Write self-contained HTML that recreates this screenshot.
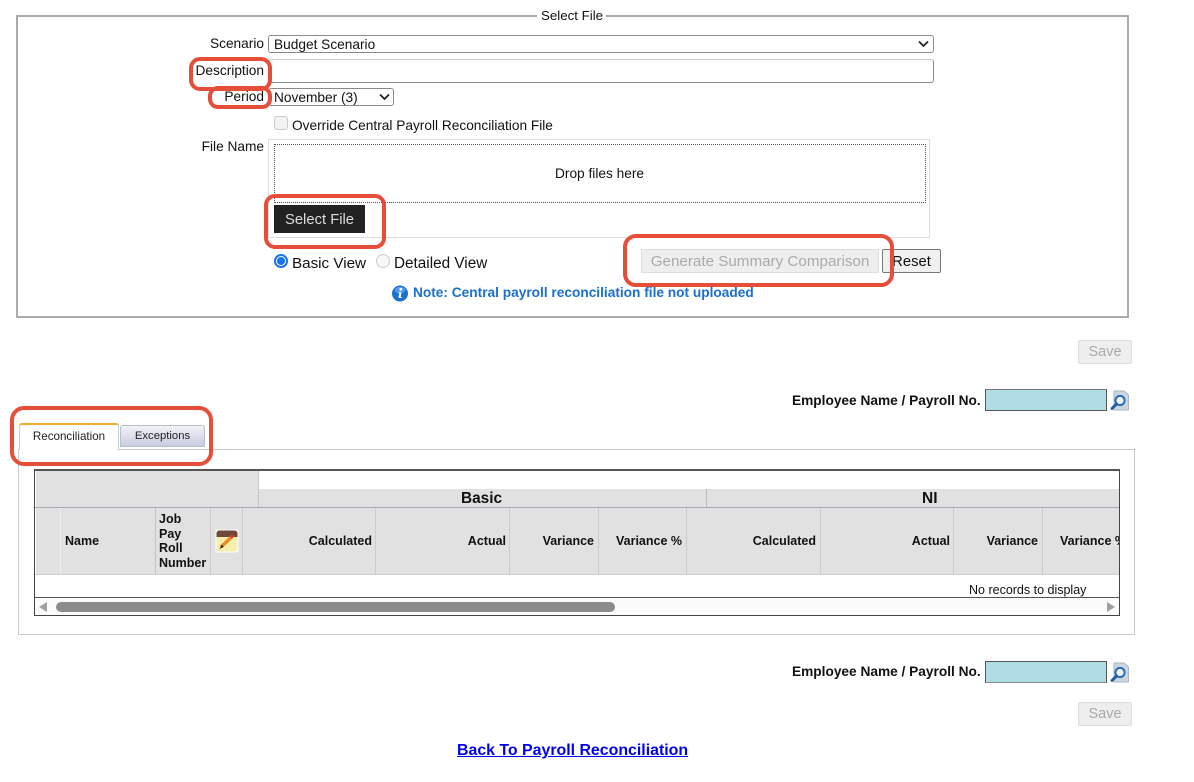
<!DOCTYPE html>
<html><head><meta charset="utf-8"><title>Select File</title>
<style>
html,body{margin:0;padding:0;background:#fff;width:1194px;height:782px;overflow:hidden}
body{position:relative;font-family:"Liberation Sans",sans-serif;font-size:13.7px;color:#111}
#w{position:absolute;left:0;top:0;width:1194px;height:782px;filter:blur(0.3px)}
.a{position:absolute;box-sizing:border-box}
.t{position:absolute;white-space:nowrap;line-height:16px}
.r{text-align:right}
.b{font-weight:bold}
.red{position:absolute;box-sizing:border-box;border:4px solid #e64e3a;background:transparent;z-index:5}
.btn{position:absolute;box-sizing:border-box;text-align:center;border-radius:2px;white-space:nowrap}
.dis{background:#eee;border:1px solid #ddd;color:#aaa;font-size:14.5px}
.h{position:absolute;background:#e1e1e1;box-sizing:border-box;border-right:1px solid #ccc;}
.th{position:absolute;font-weight:bold;font-size:12.5px;line-height:16px;white-space:nowrap}
</style></head><body><div id="w">

<!-- fieldset -->
<div class="a" style="left:16px;top:15px;width:1113px;height:303px;border:2px solid #ababab"></div>
<div class="t" style="left:537px;top:8px;background:#fff;padding:0 3px 0 4px;font-size:13.3px">Select File</div>

<div class="t r" style="left:164px;width:100px;top:36px">Scenario</div>
<div class="a" style="left:268px;top:35px;width:666px;height:18px;border:1px solid #8a8a8a;border-radius:3px"></div>
<div class="t" style="left:274px;top:37px">Budget Scenario</div>
<svg class="a" style="left:917px;top:39px" width="14" height="10"><path d="M2 2.5 L6.5 7 L11 2.5" fill="none" stroke="#222" stroke-width="1.8"/></svg>

<div class="t r" style="left:164px;width:100px;top:63px">Description</div>
<div class="a" style="left:268px;top:59px;width:666px;height:24px;border:1px solid #8a8a8a;border-top-color:#ccc;border-radius:3px"></div>

<div class="t r" style="left:164px;width:100px;top:89px">Period</div>
<div class="a" style="left:268px;top:88px;width:126px;height:18px;border:1px solid #8a8a8a;border-radius:3px"></div>
<div class="t" style="left:274px;top:90px">November (3)</div>
<svg class="a" style="left:378px;top:92px" width="14" height="10"><path d="M2 2.5 L6.5 7 L11 2.5" fill="none" stroke="#222" stroke-width="1.8"/></svg>

<div class="a" style="left:274px;top:116px;width:14px;height:14px;background:#f2f2f2;border:1px solid #ccc;border-radius:3px"></div>
<div class="t" style="left:292px;top:118px">Override Central Payroll Reconciliation File</div>

<div class="t r" style="left:164px;width:100px;top:139px">File Name</div>
<div class="a" style="left:268px;top:139px;width:662px;height:99px;border:1px solid #ddd"></div>
<div class="a" style="left:274px;top:144px;width:652px;height:59px;border:1px dotted #555"></div>
<div class="t" style="left:555px;top:166px">Drop files here</div>
<div class="a" style="left:274px;top:205px;width:91px;height:28px;background:#222;color:#ddd;font-size:14.8px;line-height:28px;padding-top:1px;text-align:center">Select File</div>

<div class="a" style="left:274px;top:254px;width:14px;height:14px;border-radius:50%;border:2px solid #1a73e8;background:#fff"></div>
<div class="a" style="left:277px;top:257px;width:8px;height:8px;border-radius:50%;background:#1a73e8"></div>
<div class="t" style="left:292px;top:255px;font-size:15.2px;margin-top:1px">Basic View</div>
<div class="a" style="left:376px;top:254px;width:14px;height:14px;border-radius:50%;border:1px solid #ccc;background:#f8f8f8"></div>
<div class="t" style="left:394px;top:255px;font-size:15.3px;margin-top:1px">Detailed View</div>

<div class="btn dis" style="left:641px;top:249px;width:238px;height:24px;line-height:23px;border-radius:1px;font-size:15.2px">Generate Summary Comparison</div>
<div class="btn" style="left:882px;top:249px;width:59px;height:24px;line-height:24px;border:1px solid #777;background:#f0f0f0;font-size:14.8px;color:#111">Reset</div>

<svg class="a" style="left:391px;top:284px" width="18" height="18" viewBox="0 0 18 18"><circle cx="9" cy="9.5" r="8" fill="#1a6fd0"/><ellipse cx="9" cy="6" rx="5.5" ry="3.2" fill="#4f9bea"/><circle cx="9.8" cy="5.3" r="1.4" fill="#fff"/><path d="M7.5 8.2 H10.5 L9.7 13 H10.8 V14 H7.3 L8.3 9.2 H7.5 Z" fill="#fff"/></svg>
<div class="t b" style="left:413px;top:285px;color:#1a6fd0;font-size:13.7px">Note: Central payroll reconciliation file not uploaded</div>

<!-- red highlights -->
<div class="red" style="left:189px;top:57px;width:83px;height:34px;border-radius:11px"></div>
<div class="red" style="left:208px;top:86px;width:64px;height:23px;border-radius:10px"></div>

<div class="btn dis" style="left:1078px;top:340px;width:54px;height:24px;line-height:23px">Save</div>

<div class="t b" style="left:792px;top:393px;font-size:13.7px">Employee Name / Payroll No.</div>
<div class="a" style="left:985px;top:389px;width:122px;height:22px;background:#b0dce5;border:1px solid #555;border-top-color:#777"></div>
<svg class="a" style="left:1110px;top:390px" width="20" height="21" viewBox="0 0 20 21"><path d="M4 1 H14 L18.5 5 V20 H4 Z" fill="#ccd6e1" stroke="#aab5c3"/><circle cx="10" cy="10.5" r="4.6" fill="#eef6fc" stroke="#2a6db5" stroke-width="2"/><path d="M6.5 14 L2 18.5" stroke="#1c5aa0" stroke-width="2.8" stroke-linecap="round"/></svg>

<!-- tab panel -->
<div class="a" style="left:18px;top:449px;width:1117px;height:186px;border:1px solid #c5cbcb"></div>
<div class="a" style="left:19px;top:423px;width:100px;height:27px;background:#fff;border:1px solid #c5d0d0;border-top:2px solid #f0ad2e;border-bottom:none;border-radius:3px 3px 0 0;font-size:11.6px;line-height:23px;text-align:center;color:#222">Reconciliation</div>
<div class="a" style="left:120px;top:425px;width:85px;height:22px;background:linear-gradient(#f2f2f8,#c9cbe0);border:1px solid #b4c0c4;border-radius:3px 3px 0 0;font-size:11.3px;line-height:21px;text-align:center;color:#222">Exceptions</div>

<!-- grid -->
<div class="a" style="left:34px;top:469px;width:1086px;height:147px;border:1px solid #444;border-top:2px solid #555;overflow:hidden;background:#fff" id="g">
  <div class="h" style="left:1px;top:0;width:223px;height:37px;border-right:1px solid #c4c4cc"></div>
  <div class="h" style="left:224px;top:18px;width:448px;height:19px;border-right:1px solid #bbb"></div>
  <div class="h" style="left:672px;top:18px;width:414px;height:19px;border-right:none"></div>
  <div class="a" style="left:0;top:36px;width:1086px;height:1px;background:#a8a8b4;z-index:2"></div>
  <div class="h" style="left:1px;top:37px;width:25px;height:66px;border-right:1px solid #eee"></div>
  <div class="h" style="left:26px;top:37px;width:95px;height:66px;border-right:1px solid #c4c4c4"></div>
  <div class="h" style="left:121px;top:37px;width:55px;height:66px"></div>
  <div class="h" style="left:176px;top:37px;width:32px;height:66px"></div>
  <div class="h" style="left:208px;top:37px;width:133px;height:66px"></div>
  <div class="h" style="left:341px;top:37px;width:134px;height:66px"></div>
  <div class="h" style="left:475px;top:37px;width:89px;height:66px"></div>
  <div class="h" style="left:564px;top:37px;width:88px;height:66px"></div>
  <div class="h" style="left:652px;top:37px;width:134px;height:66px"></div>
  <div class="h" style="left:786px;top:37px;width:133px;height:66px"></div>
  <div class="h" style="left:919px;top:37px;width:89px;height:66px"></div>
  <div class="h" style="left:1008px;top:37px;width:80px;height:66px;border:none"></div>
  <div class="a" style="left:0;top:103px;width:1086px;height:1px;background:#d0d0d0"></div>

  <div class="t b" style="left:426px;top:20px;font-size:15.4px">Basic</div>
  <div class="t b" style="left:887px;top:20px;font-size:15.5px">NI</div>

  <div class="th" style="left:30px;top:62px">Name</div>
  <div class="th" style="left:124px;top:41px;line-height:14.5px;white-space:normal;width:52px">Job<br>Pay<br>Roll<br>Number</div>
  <svg class="a" style="left:180px;top:58px" width="24" height="24" viewBox="0 0 24 24"><rect x="0.5" y="0.5" width="23" height="23" rx="2" fill="#fff"/><rect x="1.5" y="1.5" width="21" height="21" rx="3" fill="#f5efae"/><path d="M1.5 8 V4.5 Q1.5 1.5 4.5 1.5 H19.5 Q22.5 1.5 22.5 4.5 V8 Z" fill="#6e4a3a"/><path d="M6 18 L17 7.5" stroke="#f08a24" stroke-width="3.6"/><path d="M16 6.5 L18 8.5" stroke="#d83a2a" stroke-width="3.4"/><path d="M4.5 20 L6.8 15.8 L8.6 17.8 Z" fill="#222"/></svg>
  <div class="th r" style="left:208px;width:129px;top:62px">Calculated</div>
  <div class="th r" style="left:341px;width:130px;top:62px">Actual</div>
  <div class="th r" style="left:475px;width:84px;top:62px">Variance</div>
  <div class="th r" style="left:564px;width:83px;top:62px">Variance %</div>
  <div class="th r" style="left:652px;width:129px;top:62px">Calculated</div>
  <div class="th r" style="left:786px;width:129px;top:62px">Actual</div>
  <div class="th r" style="left:919px;width:84px;top:62px">Variance</div>
  <div class="th" style="left:1025px;top:62px">Variance %</div>

  <div class="t" style="left:934px;top:111px;font-size:12.5px">No records to display</div>

  <div class="a" style="left:0;top:126px;width:1086px;height:19px;border-top:1px solid #555;background:#fbfbfb"></div>
  <div class="a" style="left:21px;top:131px;width:559px;height:10px;background:#8c8c8c;border-radius:5px"></div>
  <svg class="a" style="left:3px;top:130px" width="10" height="12"><path d="M9 1 V11 L1 6 Z" fill="#a0a0a0"/></svg>
  <svg class="a" style="left:1071px;top:130px" width="10" height="12"><path d="M1 1 V11 L9 6 Z" fill="#a0a0a0"/></svg>
</div>

<div class="t b" style="left:792px;top:664px;font-size:13.7px">Employee Name / Payroll No.</div>
<div class="a" style="left:985px;top:661px;width:122px;height:22px;background:#b0dce5;border:1px solid #555;border-bottom-color:#888"></div>
<svg class="a" style="left:1110px;top:662px" width="20" height="21" viewBox="0 0 20 21"><path d="M4 1 H14 L18.5 5 V20 H4 Z" fill="#ccd6e1" stroke="#aab5c3"/><circle cx="10" cy="10.5" r="4.6" fill="#eef6fc" stroke="#2a6db5" stroke-width="2"/><path d="M6.5 14 L2 18.5" stroke="#1c5aa0" stroke-width="2.8" stroke-linecap="round"/></svg>

<div class="btn dis" style="left:1078px;top:702px;width:54px;height:24px;line-height:23px">Save</div>

<div class="t b" style="left:457px;top:743px;font-size:15.9px;color:#00e;text-decoration:underline">Back To Payroll Reconciliation</div>

<!-- remaining red highlights -->
<div class="red" style="left:264px;top:194px;width:122px;height:55px;border-radius:11px"></div>
<div class="red" style="left:623px;top:234px;width:271px;height:53px;border-radius:13px"></div>
<div class="red" style="left:10px;top:406px;width:203px;height:60px;border-radius:14px"></div>

</div></body></html>
